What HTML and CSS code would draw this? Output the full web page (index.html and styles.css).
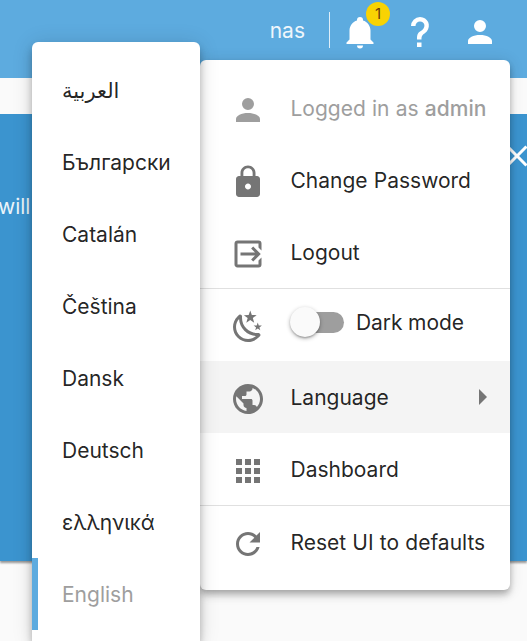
FILE: index.html
```html
<!DOCTYPE html>
<html lang="en">
<head>
<meta charset="utf-8">
<title>nas</title>
<link rel="stylesheet" href="styles.css">
</head>
<body>
<svg class="defs" width="0" height="0">
  <symbol id="account" viewBox="0 0 24 24"><path d="M12,4A4,4 0 0,1 16,8A4,4 0 0,1 12,12A4,4 0 0,1 8,8A4,4 0 0,1 12,4M12,14C16.42,14 20,15.79 20,18V20H4V18C4,15.79 7.58,14 12,14Z"/></symbol>
</svg>
<header class="topbar">
  <span class="host">nas</span>
  <span class="rule"></span>
  <span class="action bell">
    <svg class="icon" viewBox="0 0 24 24"><path d="M21,19V20H3V19L5,17V11C5,7.9 7.03,5.17 10,4.29C10,4.19 10,4.1 10,4A2,2 0 0,1 12,2A2,2 0 0,1 14,4C14,4.1 14,4.19 14,4.29C16.97,5.17 19,7.9 19,11V17L21,19M14,21A2,2 0 0,1 12,23A2,2 0 0,1 10,21"/></svg>
    <span class="badge">1</span>
  </span>
  <span class="action"><svg class="icon" viewBox="0 0 24 24"><path d="M10,19H13V22H10V19M12,2C17.35,2.22 19.68,7.62 16.5,11.67C15.67,12.67 14.33,13.33 13.67,14.17C13,15 13,16 13,17H10C10,15.33 10,13.92 10.67,12.92C11.33,11.92 12.67,11.33 13.5,10.67C15.92,8.43 15.32,5.26 12,5A3,3 0 0,0 9,8H6A6,6 0 0,1 12,2Z"/></svg></span>
  <span class="action"><svg class="icon"><use href="#account"/></svg></span>
</header>
<main class="panel">
  <p class="message">will</p>
  <svg class="close" viewBox="0 0 24 24"><path d="M19 6.41L17.59 5 12 10.59 6.41 5 5 6.41 10.59 12 5 17.59 6.41 19 12 13.41 17.59 19 19 17.59 13.41 12z"/></svg>
</main>

<nav class="menu user-menu">
  <div class="item disabled"><svg class="icon"><use href="#account"/></svg><span class="label">Logged in as <b>admin</b></span></div>
  <div class="item"><svg class="icon" viewBox="0 0 24 24"><path d="M18 8h-1V6c0-2.76-2.24-5-5-5S7 3.24 7 6v2H6c-1.1 0-2 .9-2 2v10c0 1.1.9 2 2 2h12c1.1 0 2-.9 2-2V10c0-1.1-.9-2-2-2zm-6 9c-1.1 0-2-.9-2-2s.9-2 2-2 2 .9 2 2-.9 2-2 2zM15.1 8H8.9V6c0-1.71 1.39-3.1 3.1-3.1s3.1 1.39 3.1 3.1v2z"/></svg><span class="label">Change Password</span></div>
  <div class="item"><svg class="icon" viewBox="0 0 24 24"><path d="M14.08,15.59L16.67,13H7V11H16.67L14.08,8.41L15.5,7L20.5,12L15.5,17L14.08,15.59M19,3A2,2 0 0,1 21,5V9.67L19,7.67V5H5V19H19V16.33L21,14.33V19A2,2 0 0,1 19,21H5C3.89,21 3,20.1 3,19V5C3,3.89 3.89,3 5,3H19Z"/></svg><span class="label">Logout</span></div>
  <div class="item divided"><svg class="icon" viewBox="0 0 24 24"><path d="M17.75,4.09L15.22,6.03L16.13,9.09L13.5,7.28L10.87,9.09L11.78,6.03L9.25,4.09L12.44,4L13.5,1L14.56,4L17.75,4.09M21.25,11L19.61,12.25L20.2,14.23L18.5,13.06L16.8,14.23L17.39,12.25L15.75,11L17.81,10.95L18.5,9L19.19,10.95L21.25,11M18.97,15.95C19.8,15.87 20.69,17.05 20.16,17.8C19.84,18.25 19.5,18.67 19.08,19.07C15.17,23 8.84,23 4.94,19.07C1.03,15.17 1.03,8.83 4.94,4.93C5.34,4.53 5.76,4.17 6.21,3.85C6.96,3.32 8.14,4.21 8.06,5.04C7.79,7.9 8.75,10.87 10.95,13.06C13.14,15.26 16.1,16.22 18.97,15.95M17.33,17.97C14.5,17.81 11.7,16.64 9.53,14.5C7.36,12.31 6.2,9.5 6.04,6.68C3.23,9.82 3.34,14.64 6.35,17.66C9.37,20.67 14.19,20.78 17.33,17.97Z"/></svg><span class="toggle"><span class="thumb"></span></span><span class="toggle-label">Dark mode</span></div>
  <div class="item active"><svg class="icon" viewBox="0 0 24 24"><path d="M12 2C6.48 2 2 6.48 2 12s4.48 10 10 10 10-4.48 10-10S17.52 2 12 2zm-1 17.93c-3.95-.49-7-3.85-7-7.93 0-.62.08-1.21.21-1.79L9 15v1c0 1.1.9 2 2 2v1.93zm6.9-2.54c-.26-.81-1-1.39-1.9-1.39h-1v-3c0-.55-.45-1-1-1H8v-2h2c.55 0 1-.45 1-1V7h2c1.1 0 2-.9 2-2v-.41c2.93 1.19 5 4.06 5 7.41 0 2.08-.8 3.97-2.1 5.39z"/></svg><span class="label">Language</span><span class="arrow"></span></div>
  <div class="item"><svg class="icon" viewBox="0 0 24 24"><path d="M4 4h4v4H4zM10 4h4v4h-4zM16 4h4v4h-4zM4 10h4v4H4zM10 10h4v4h-4zM16 10h4v4h-4zM4 16h4v4H4zM10 16h4v4h-4zM16 16h4v4h-4z"/></svg><span class="label">Dashboard</span></div>
  <div class="item divided"><svg class="icon" viewBox="0 0 24 24"><path d="M17.65 6.35C16.2 4.9 14.21 4 12 4c-4.42 0-7.99 3.58-7.99 8s3.57 8 7.99 8c3.73 0 6.84-2.55 7.73-6h-2.08c-.82 2.33-3.04 4-5.65 4-3.31 0-6-2.69-6-6s2.69-6 6-6c1.66 0 3.14.69 4.22 1.78L13 11h7V4l-2.35 2.35z"/></svg><span class="label">Reset UI to defaults</span></div>
</nav>

<nav class="menu language-menu">
  <div class="item"><span class="label" lang="ar">العربية</span></div>
  <div class="item"><span class="label">Български</span></div>
  <div class="item"><span class="label">Catalán</span></div>
  <div class="item"><span class="label">Čeština</span></div>
  <div class="item"><span class="label">Dansk</span></div>
  <div class="item"><span class="label">Deutsch</span></div>
  <div class="item"><span class="label greek">ελληνικά</span></div>
  <div class="item disabled current"><span class="label">English</span></div>
</nav>
</body>
</html>
```
FILE: styles.css
```css
* { box-sizing: border-box; }
body {
  margin: 0;
  height: 641px;
  position: relative;
  overflow: hidden;
  background: #fafafa;
  font: 21px/30px Inter, "DejaVu Sans", sans-serif;
  color: rgba(0, 0, 0, .87);
}
.defs { position: absolute; }
.icon { width: 36px; height: 36px; flex: none; fill: currentColor; }

.topbar {
  height: 78px;
  padding: 12px 23px 0 0;
  display: flex;
  justify-content: flex-end;
  align-items: flex-start;
  background: #5dabdf;
  color: #fff;
}
.host { margin: 4px 24px 0 0; opacity: .9; }
.rule { width: 1px; height: 36px; margin-right: 6px; background: rgba(255, 255, 255, .8); }
.action { position: relative; width: 48px; height: 40px; padding: 2px 6px; margin-right: 12px; display: flex; }
.action:last-child { margin-right: 0; }
.badge {
  position: absolute;
  left: 30px;
  top: -10px;
  width: 24px;
  height: 24px;
  border-radius: 50%;
  background: #f8d303;
  color: #6b3a10;
  font-size: 15px;
  line-height: 24px;
  text-align: center;
}

.panel {
  height: 447px;
  margin-top: 36px;
  padding-top: 24px;
  display: flex;
  justify-content: space-between;
  background: #3b94cf;
  color: #fff;
  box-shadow: 0 2px 2px rgba(0, 0, 0, .4);
}
.message { margin: 54px 0 0 -2px; opacity: .9; }
.close { width: 36px; height: 36px; margin-right: -8px; fill: #fff; }

.menu {
  position: absolute;
  padding: 12px 0;
  border-radius: 6px;
  background: #fff;
}
.user-menu {
  left: 200px;
  top: 60px;
  width: 310px;
  box-shadow: 0 3px 6px -1.5px rgba(0, 0, 0, .2), 0 6px 7.5px rgba(0, 0, 0, .14), 0 1.5px 15px rgba(0, 0, 0, .12);
}
.language-menu {
  left: 32px;
  top: 42px;
  bottom: 0;
  width: 168px;
  padding-bottom: 0;
  border-radius: 6px 6px 0 0;
  box-shadow: 0 4.5px 7.5px -1.5px rgba(0, 0, 0, .2), 0 7.5px 12px rgba(0, 0, 0, .14), 0 1.5px 21px rgba(0, 0, 0, .12);
}
.item { height: 72px; padding-left: 30px; display: flex; align-items: center; white-space: nowrap; }
.label { margin-top: 2px; }
.greek { letter-spacing: -.15px; }
.user-menu .label { word-spacing: .3px; }
.user-menu .icon { margin: 4px 24.5px 0 0; color: #757575; }
.item.disabled, .user-menu .disabled .icon { color: #9e9e9e; }
.item b { font-weight: 500; }
.divided { height: 73px; border-top: 1px solid #e0e0e0; }
.active { background: #f4f4f4; }
.arrow { margin: 0 23px 0 auto; border: 8px solid transparent; border-left-color: #757575; border-right: 0; }
.toggle { position: relative; width: 51px; height: 21px; margin: -5px 12px 0 2.5px; border-radius: 11px; background: #9e9e9e; }
.thumb {
  position: absolute;
  left: -3px;
  top: -5px;
  width: 30px;
  height: 30px;
  border-radius: 50%;
  background: #fafafa;
  box-shadow: 0 3px 1.5px -3px rgba(0, 0, 0, .2), 0 1.5px 1.5px rgba(0, 0, 0, .14), 0 1.5px 4px rgba(0, 0, 0, .3);
}
.toggle-label { margin-top: -4px; letter-spacing: -.1px; }
.current { box-shadow: inset 6px 0 #5dabdf; }
```
